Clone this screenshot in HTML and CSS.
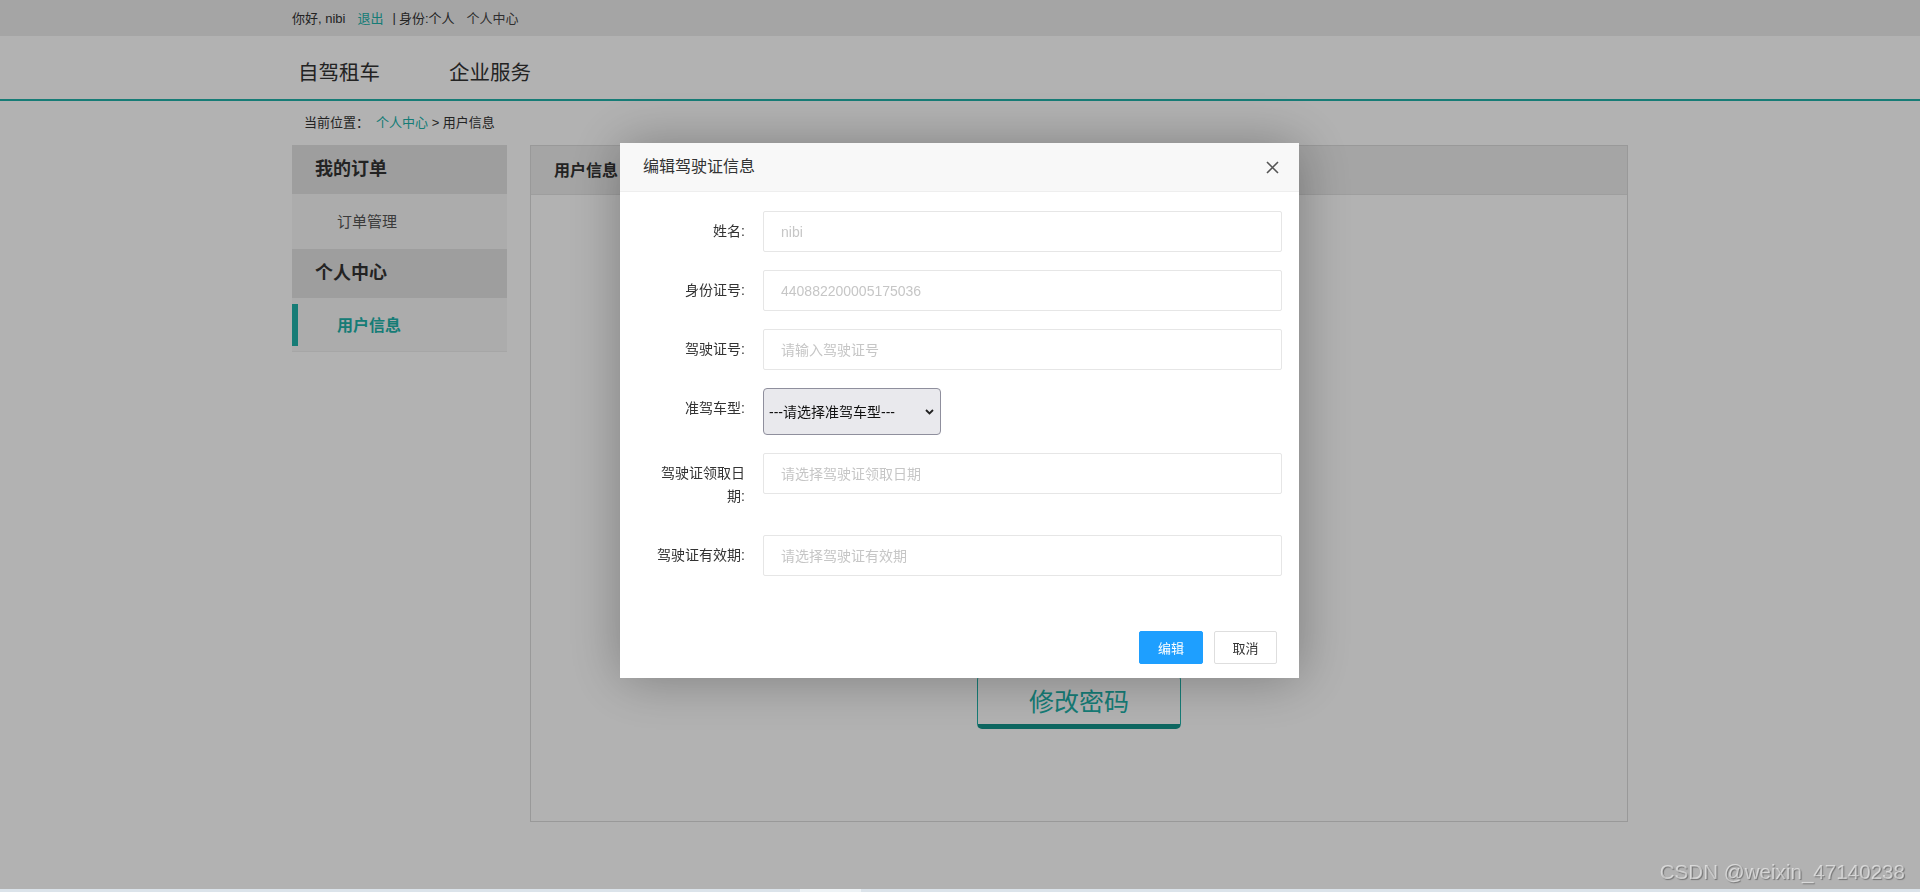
FILE: index.html
```html
<!DOCTYPE html>
<html lang="zh-CN">
<head>
<meta charset="utf-8">
<title>用户信息</title>
<link rel="stylesheet" href="styles.css">
</head>
<body>
<div class="topbar">
  <div class="container topbar-inner">
    <span class="greet">你好, nibi</span>
    <a class="link logout">退出</a>
    <span class="sep">|</span>
    <span class="role">身份:个人</span>
    <a class="center-link">个人中心</a>
  </div>
</div>
<div class="nav">
  <div class="container nav-inner">
    <a class="nav-item">自驾租车</a>
    <a class="nav-item">企业服务</a>
  </div>
</div>
<div class="container">
  <div class="crumb">当前位置：<a class="link crumb-link">个人中心</a> &gt; 用户信息</div>
  <div class="layout">
    <aside class="side">
      <div class="side-title">我的订单</div>
      <div class="side-item">订单管理</div>
      <div class="side-title">个人中心</div>
      <div class="side-item active">用户信息</div>
    </aside>
    <section class="panel">
      <div class="panel-head">用户信息</div>
      <div class="panel-body">
        <button class="pwd-btn">修改密码</button>
      </div>
    </section>
  </div>
</div>

<div class="shade"></div>

<div class="modal">
  <div class="modal-head">
    <span class="modal-title">编辑驾驶证信息</span>
    <svg class="modal-close" width="13" height="13" viewBox="0 0 13 13"><path d="M1 1 L12 12 M12 1 L1 12" stroke="#555" stroke-width="1.6" fill="none"/></svg>
  </div>
  <form class="modal-body">
    <div class="row">
      <label class="label">姓名:</label>
      <input class="input" placeholder="nibi">
    </div>
    <div class="row">
      <label class="label">身份证号:</label>
      <input class="input" placeholder="440882200005175036">
    </div>
    <div class="row">
      <label class="label">驾驶证号:</label>
      <input class="input" placeholder="请输入驾驶证号">
    </div>
    <div class="row">
      <label class="label">准驾车型:</label>
      <div class="select-wrap">
        <select class="select"><option>---请选择准驾车型---</option></select>
        <svg class="chevron" width="9" height="6" viewBox="0 0 9 6"><path d="M1 1 L4.5 4.5 L8 1" stroke="#222" stroke-width="1.8" fill="none"/></svg>
      </div>
    </div>
    <div class="row">
      <label class="label">驾驶证领取日期:</label>
      <input class="input" placeholder="请选择驾驶证领取日期">
    </div>
    <div class="row">
      <label class="label">驾驶证有效期:</label>
      <input class="input" placeholder="请选择驾驶证有效期">
    </div>
  </form>
  <div class="modal-foot">
    <button class="btn btn-primary">编辑</button>
    <button class="btn btn-default">取消</button>
  </div>
</div>

<div class="watermark">CSDN @weixin_47140238</div>
<div class="taskbar"></div>
</body>
</html>
```

FILE: styles.css
```css
* { box-sizing: border-box; }
html, body { margin: 0; padding: 0; }
body {
  background: #fff;
  color: #333;
  font-family: "Liberation Sans", "Noto Sans CJK SC", sans-serif;
  font-size: 14px;
  height: 892px;
  overflow: hidden;
}
a { text-decoration: none; cursor: pointer; }
.container { width: 1336px; margin: 0 auto; }

/* top bar */
.topbar { background: #ededed; height: 36px; }
.topbar-inner {
  height: 36px;
  display: flex;
  align-items: center;
  padding-bottom: 2px;
  font-size: 13px;
  color: #333;
}
.link { color: #20b2aa; }
.logout { margin-left: 12px; }
.sep { margin-left: 9px; margin-right: 3px; }
.center-link { color: #444; margin-left: 12px; }

/* nav */
.nav { height: 65px; border-bottom: 2px solid #20b2aa; background: #fff; }
.nav-inner { height: 63px; display: flex; align-items: center; padding: 7px 0 0 6px; }
.nav-item { font-size: 20.5px; color: #333; margin-right: 69px; }

/* breadcrumb */
.crumb { height: 44px; line-height: 44px; padding-left: 12px; font-size: 13px; color: #333; }
.crumb-link { margin-left: 7px; }

.layout { display: flex; gap: 23px; }

/* sidebar */
.side { width: 215px; flex: none; }
.side-title {
  height: 49px; line-height: 49px; padding-left: 23px;
  background: #e3e3e3; font-size: 18px; font-weight: bold; color: #333;
}
.side-item {
  height: 55px; line-height: 55px; padding-left: 45px;
  background: #f7f7f7; font-size: 15px; color: #555;
}
.side-item.active {
  position: relative; height: 54px; color: #20b2aa; font-weight: bold; font-size: 16px;
  border-bottom: 1px solid #eee;
}
.side-item.active::before {
  content: ""; position: absolute; left: 0; top: 6px; bottom: 5px; width: 6px; background: #20b2aa;
}

/* panel */
.panel { flex: 1; height: 677px; border: 1px solid #dcdcdc; }
.panel-head {
  height: 49px; line-height: 49px; padding-left: 23px;
  background: #ececec; font-size: 16px; font-weight: bold; color: #333;
  border-bottom: 1px solid #e2e2e2;
}
.panel-body { display: flex; justify-content: center; padding-top: 480px; }
.pwd-btn {
  width: 204px; height: 54px;
  background: #fff; color: #20b2aa;
  border: 1px solid #20b2aa; border-bottom: 5px solid #13938b; border-radius: 5px;
  font-family: "Liberation Sans", "Noto Sans CJK SC", sans-serif;
  font-size: 25px; padding: 0;
}

/* shade */
.shade { position: fixed; inset: 0; background: rgba(0, 0, 0, 0.3); z-index: 10; }

/* modal */
.modal {
  position: fixed; left: 620px; top: 143px; width: 679px;
  background: #fff; z-index: 20;
  box-shadow: 1px 1px 50px rgba(0, 0, 0, 0.3);
}
.modal-head {
  position: relative; height: 49px; line-height: 48px;
  background: #f8f8f8; border-bottom: 1px solid #eee;
  padding-left: 23px; font-size: 16px; color: #333;
}
.modal-close { position: absolute; right: 20px; top: 18px; }
.modal-body { padding: 19px 17px 0 33px; margin: 0; }
.row { display: flex; align-items: flex-start; margin-bottom: 18px; }
.row:last-child { margin-bottom: 0; }
.label {
  width: 92px; flex: none; text-align: right;
  padding: 9px 0 9px 0; line-height: 23px;
  font-size: 14px; color: #333; margin-right: 18px;
}
.input {
  flex: 1; height: 41px; border: 1px solid #e6e6e6; border-radius: 2px;
  padding: 0 0 0 17px; font-size: 14px; color: #333; background: #fff; outline: none;
  font-family: "Liberation Sans", "Noto Sans CJK SC", sans-serif;
}
.input::placeholder { color: #c6c6c6; }
.select-wrap { position: relative; width: 178px; height: 47px; }
.select {
  appearance: none; -webkit-appearance: none;
  width: 178px; height: 47px;
  background: #e9e9ed; border: 1px solid #8f8f9d; border-radius: 4px;
  padding: 0 0 0 5px; font-size: 14px; color: #111;
  font-family: "Liberation Sans", "Noto Sans CJK SC", sans-serif;
}
.chevron { position: absolute; right: 7px; top: 21px; pointer-events: none; }
.modal-foot { display: flex; justify-content: flex-end; gap: 11px; padding: 55px 22px 14px 0; }
.btn {
  height: 33px; border-radius: 2px; font-size: 13px; padding: 0;
  font-family: "Liberation Sans", "Noto Sans CJK SC", sans-serif;
}
.btn-primary { width: 64px; background: #1e9fff; border: 1px solid #1e9fff; color: #fff; }
.btn-default { width: 63px; background: #fff; border: 1px solid #dedede; color: #333; }

/* watermark + strip */
.watermark {
  position: fixed; right: 15px; bottom: 8px; z-index: 30;
  font-family: "Liberation Sans", sans-serif; font-size: 20.6px;
  color: rgba(255, 255, 255, 0.55);
  text-shadow: 1px 1px 1px rgba(0, 0, 0, 0.35);
}
.taskbar {
  position: fixed; left: 0; right: 0; bottom: 0; height: 3px; z-index: 30;
  background: linear-gradient(to right, #dbe3ea 0, #dbe3ea 800px, #eef3f6 800px, #eef3f6 861px, #dbe3ea 861px);
}
```
